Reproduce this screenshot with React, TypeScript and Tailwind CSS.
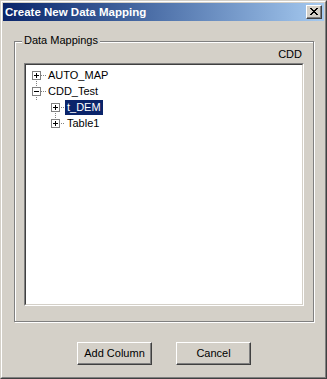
import React from "react";

function Dots({ pts }: { pts: [number, number][] }) {
  return (
    <>
      {pts.map(([x, y], i) => (
        <rect key={i} x={x} y={y} width={1} height={1} fill="#808080" />
      ))}
    </>
  );
}

function hDots(x1: number, x2: number, y: number): [number, number][] {
  const r: [number, number][] = [];
  for (let x = x1; x <= x2; x += 2) r.push([x, y]);
  return r;
}
function vDots(x: number, y1: number, y2: number): [number, number][] {
  const r: [number, number][] = [];
  for (let y = y1; y <= y2; y += 2) r.push([x, y]);
  return r;
}

function Expander({ open }: { open?: boolean }) {
  return (
    <svg width="9" height="9" viewBox="0 0 9 9" className="shrink-0 block">
      <rect x="0.5" y="0.5" width="8" height="8" fill="#fff" stroke="#808080" />
      <rect x="2" y="4" width="5" height="1" fill="#000" />
      {!open && <rect x="4" y="2" width="1" height="5" fill="#000" />}
    </svg>
  );
}

function CloseGlyph() {
  const px: [number, number][] = [
    [0, 0], [1, 0], [6, 0], [7, 0],
    [1, 1], [2, 1], [5, 1], [6, 1],
    [2, 2], [3, 2], [4, 2], [5, 2],
    [3, 3], [4, 3],
    [2, 4], [3, 4], [4, 4], [5, 4],
    [1, 5], [2, 5], [5, 5], [6, 5],
    [0, 6], [1, 6], [6, 6], [7, 6],
  ];
  return (
    <svg width="8" height="7" viewBox="0 0 8 7" className="block">
      {px.map(([x, y], i) => (
        <rect key={i} x={x} y={y} width={1} height={1} fill="#000" />
      ))}
    </svg>
  );
}

function Row({
  indent,
  open,
  label,
  selected,
}: {
  indent: number;
  open?: boolean;
  label: string;
  selected?: boolean;
}) {
  return (
    <div className="h-[16px] flex items-center" style={{ paddingLeft: indent }}>
      <Expander open={open} />
      <span
        className={
          "ml-[5px] px-[2px] h-[15px] leading-[15px] whitespace-nowrap " +
          (selected ? "bg-[#0A246A] text-white" : "text-black")
        }
      >
        {label}
      </span>
    </div>
  );
}

export default function App() {
  // tree inner origin at page (26,65)
  const ox = 26;
  const oy = 65;
  const pts: [number, number][] = [
    ...hDots(41, 45, 75),
    ...vDots(36, 81, 85),
    ...hDots(41, 45, 91),
    ...vDots(36, 97, 99),
    ...hDots(61, 63, 107),
    ...vDots(55, 113, 117),
    ...hDots(61, 63, 123),
  ].map(([x, y]) => [x - ox, y - oy] as [number, number]);

  return (
    <div className="w-[327px] h-[379px] bg-[#D4D0C8] border border-t-[#D4D0C8] border-l-[#D4D0C8] border-r-[#404040] border-b-[#404040] font-['Liberation_Sans',Arial,sans-serif] text-[11px] text-black select-none">
      <div className="h-full border border-t-white border-l-white border-r-[#808080] border-b-[#808080] p-px flex flex-col">
        {/* Title bar */}
        <div className="h-[18px] shrink-0 bg-linear-to-r from-[#0A246A] to-[#A6CAF0] flex items-center justify-between pl-[2px] pr-[2px]">
          <span className="text-white font-bold text-[11.5px] leading-[18px] whitespace-nowrap">
            Create New Data Mapping
          </span>
          <div className="w-[16px] h-[14px] bg-[#D4D0C8] border border-t-white border-l-white border-r-[#404040] border-b-[#404040] shadow-[inset_-1px_-1px_0_#808080] flex items-center justify-center pb-px">
            <CloseGlyph />
          </div>
        </div>

        {/* Body */}
        <div className="flex flex-col pt-[20px] pl-[11px]">
          {/* Group box */}
          <div className="relative w-[300px] h-[281px] border border-[#808080] shadow-[inset_1px_1px_0_#fff,1px_1px_0_#fff] pt-[6px] pl-[9px]">
            <span className="absolute left-[7px] top-[-8px] px-[2px] bg-[#D4D0C8] leading-[13px] whitespace-nowrap">
              Data Mappings
            </span>
            <div className="w-[280px] h-[13px] leading-[13px] text-right pr-[2px]">CDD</div>
            <div className="mt-[2px] w-[280px] h-[243px] border border-t-[#808080] border-l-[#808080] border-r-white border-b-white">
              <div className="relative h-full border border-t-[#404040] border-l-[#404040] border-r-[#D4D0C8] border-b-[#D4D0C8] bg-white pt-[2px]">
                <svg
                  className="absolute left-0 top-0 pointer-events-none"
                  width="276"
                  height="239"
                >
                  <Dots pts={pts} />
                </svg>
                <Row indent={6} label="AUTO_MAP" />
                <Row indent={6} open label="CDD_Test" />
                <Row indent={25} label="t_DEM" selected />
                <Row indent={25} label="Table1" />
              </div>
            </div>
          </div>

          {/* Buttons */}
          <div className="mt-[20px] flex gap-[24px] pl-[63px]">
            <button className="w-[75px] h-[23px] bg-[#D4D0C8] border border-t-white border-l-white border-r-[#404040] border-b-[#404040] shadow-[inset_-1px_-1px_0_#808080] text-[11px] text-black leading-none">
              Add Column
            </button>
            <button className="w-[75px] h-[23px] bg-[#D4D0C8] border border-t-white border-l-white border-r-[#404040] border-b-[#404040] shadow-[inset_-1px_-1px_0_#808080] text-[11px] text-black leading-none">
              Cancel
            </button>
          </div>
        </div>
      </div>
    </div>
  );
}
